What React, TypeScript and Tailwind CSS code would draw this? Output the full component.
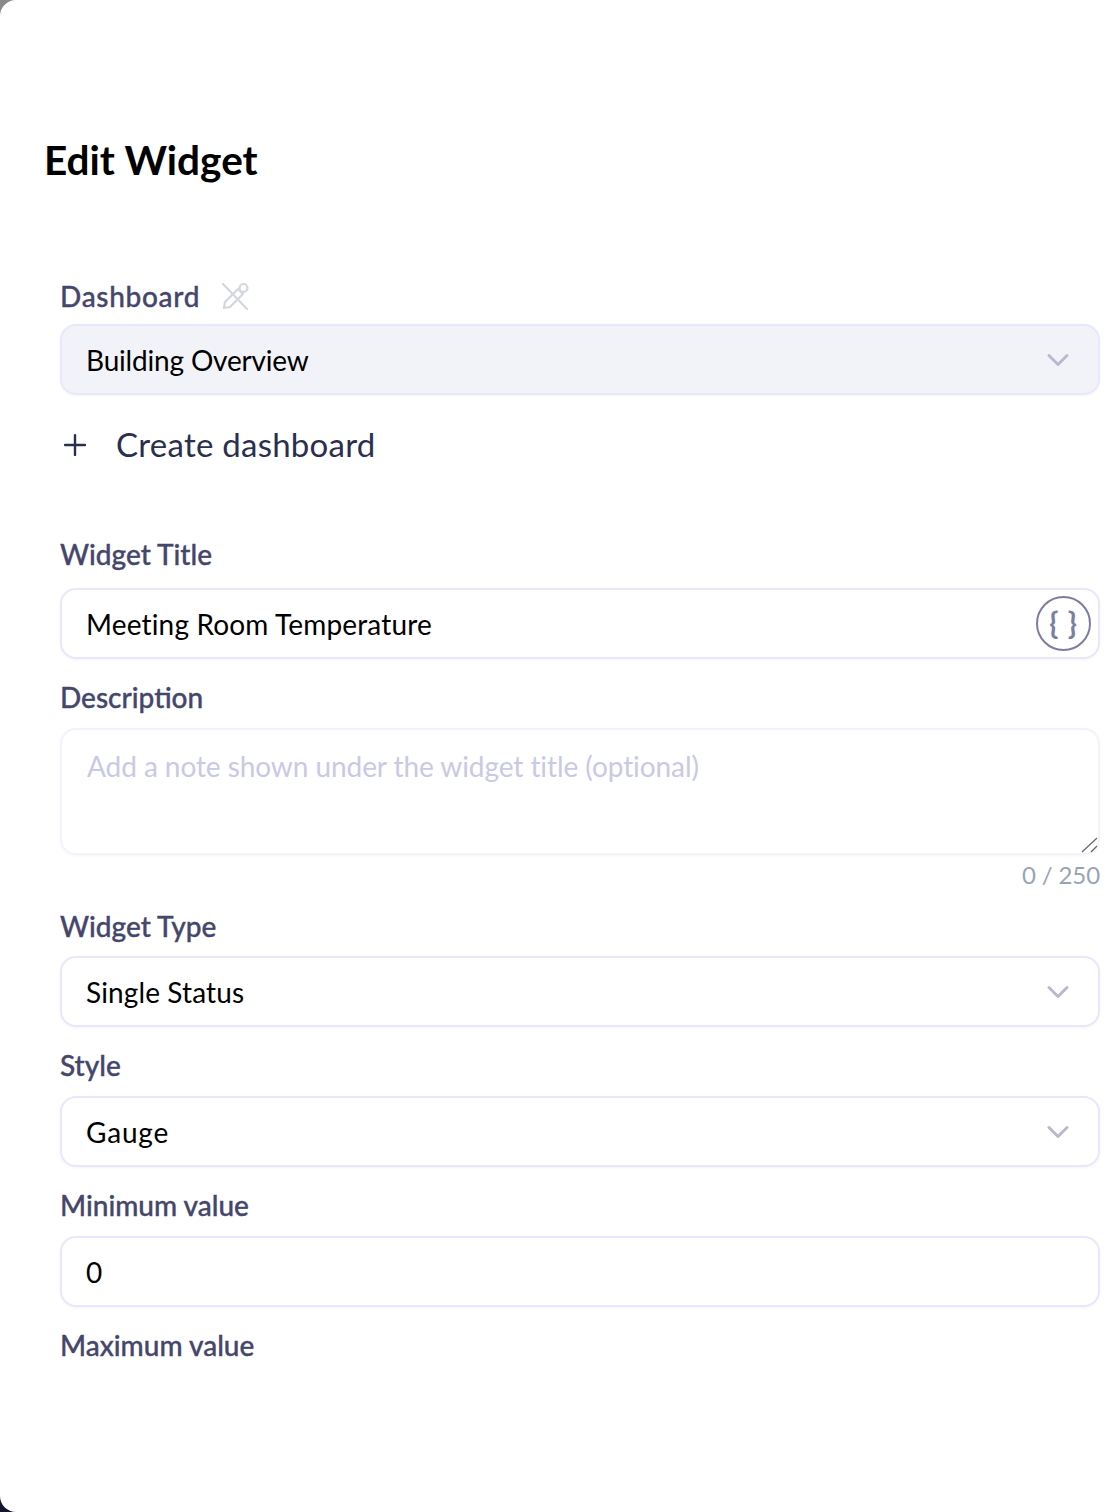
import { ChevronDown, Plus } from "lucide-react";

const labelText = "text-[28px] leading-[36px] font-medium text-[#45466b] [-webkit-text-stroke:0.35px_#45466b]";

const inputBox =
  "flex h-[71px] w-full items-center rounded-[16px] border-2 border-[#e8e8fc] pl-[24px] pr-[22px] text-[28px] text-black shadow-[0_1px_3px_rgba(60,60,140,0.05)] outline-none";

function FieldLabel({ children }: { children: React.ReactNode }) {
  return <label className={`mt-[20px] mb-[13px] block h-[36px] ${labelText}`}>{children}</label>;
}

function SelectField({ value, muted, tracking }: { value: string; muted?: boolean; tracking?: string }) {
  return (
    <div className={`${inputBox} justify-between ${muted ? "bg-[#f2f3f8]" : "bg-white"}`}>
      <span className={tracking}>{value}</span>
      <ChevronDown className="size-[36px] text-[#b9b9cf]" strokeWidth={2} />
    </div>
  );
}

function PinOffIcon() {
  return (
    <svg width="28" height="28" viewBox="0 0 28 28" fill="none" stroke="#d3d7de" strokeWidth="2.2" strokeLinecap="round" strokeLinejoin="round">
      <path d="M2 2 L26 27" />
      <path d="M3 26 L4 20 L17 7 L22 12 L9 25 Z" />
      <circle cx="22.5" cy="6" r="4" />
    </svg>
  );
}

export default function App() {
  return (
    <div className="h-[1512px] w-full overflow-hidden bg-[linear-gradient(180deg,#8a8a8a_0%,#8a8a8a_2%,#15152b_98%)] font-['Lato',sans-serif]">
      <div className="h-full w-full rounded-l-[16px] bg-white pt-[132px] pr-[12px] pl-[44px]">
        <h1 className="h-[56px] text-[40.5px] leading-[56px] font-bold text-black">Edit Widget</h1>

        <div className="mt-[90px] pl-[16px]">
          <div className="mb-[10px] flex h-[36px] items-center gap-[21px]">
            <span className={`${labelText} tracking-[0.7px]`}>Dashboard</span>
            <PinOffIcon />
          </div>
          <SelectField value="Building Overview" muted tracking="tracking-[-0.18px]" />

          <button className="mt-[29px] flex h-[42px] items-center text-[33px] tracking-[0.25px] text-[#2b2f4e]">
            <Plus className="ml-[-2px] size-[34px]" strokeWidth={1.7} />
            <span className="ml-[24px]">Create dashboard</span>
          </button>

          <div className="mt-[70px]">
            <label className={`mb-[16px] block h-[36px] ${labelText}`}>Widget Title</label>
            <div className={`${inputBox} relative bg-white`}>
              <span className="tracking-[0.16px]">Meeting Room Temperature</span>
              <button className="absolute top-[6px] right-[7px] flex size-[55px] items-center justify-center rounded-full border-2 border-[#7d7d9f] pb-[3px] text-[30px] leading-none font-bold tracking-[1px] text-[#7d7d9f]">
                {"{ }"}
              </button>
            </div>
          </div>

          <FieldLabel>Description</FieldLabel>
          <div className="relative">
            <textarea
              className="block h-[127px] w-full resize-none rounded-[16px] border-2 border-[#f3f3fc] pt-[15px] pr-[24px] pl-[25px] text-[28px] tracking-[-0.07px] text-black shadow-[0_1px_3px_rgba(60,60,140,0.05)] outline-none placeholder:text-[#c9c9e6]"
              placeholder="Add a note shown under the widget title (optional)"
            />
            <svg className="absolute right-[1px] bottom-[2px]" width="18" height="16" viewBox="0 0 18 16" fill="none" stroke="#666" strokeWidth="1.2">
              <path d="M1 15 L16 1" />
              <path d="M10 15 L16 9" />
            </svg>
          </div>
          <div className="mt-[4px] h-[32px] text-right text-[24px] leading-[32px] tracking-[-0.1px] text-[#9aa3b5]">0 / 250</div>

          <div className="mt-[17px]">
            <label className={`mb-[12px] block h-[36px] ${labelText}`}>Widget Type</label>
            <SelectField value="Single Status" tracking="tracking-[0.12px]" />
          </div>

          <FieldLabel>Style</FieldLabel>
          <SelectField value="Gauge" tracking="tracking-[0.8px]" />

          <FieldLabel>Minimum value</FieldLabel>
          <input className={`${inputBox} bg-white`} defaultValue="0" />

          <FieldLabel>Maximum value</FieldLabel>
        </div>
      </div>
    </div>
  );
}
